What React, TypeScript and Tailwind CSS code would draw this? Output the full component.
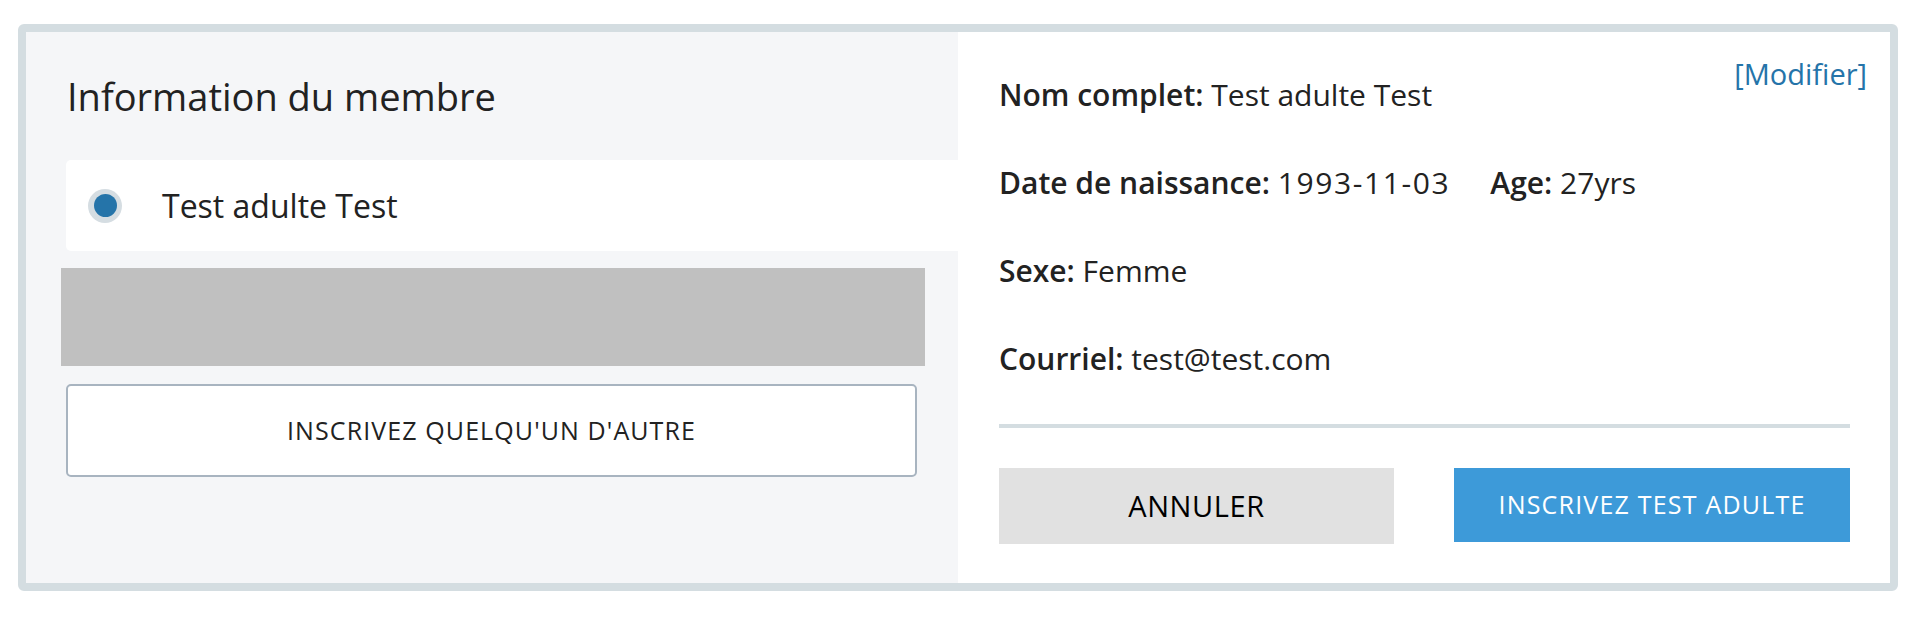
import React from "react";

export default function App() {
  const font = { fontFamily: "'Open Sans', Lato, sans-serif" };
  return (
    <div className="w-[1924px] h-[618px] bg-white pl-[18px] pt-[24px]" style={font}>
      <div className="w-[1880px] h-[567px] border-[8px] border-[#d4dde1] rounded-[6px] flex overflow-hidden text-[#222]">
        <div className="w-[932px] h-full bg-[#f5f6f8] flex flex-col">
          <h1 className="ml-[41px] mt-[40px] text-[38px] leading-[48px] font-normal text-[#222]">
            Information du membre
          </h1>
          <div className="ml-[40px] mt-[40px] h-[91px] bg-white rounded-l-[5px] flex items-center">
            <div className="ml-[22px] w-[34px] h-[34px] rounded-full bg-[#d5dde2] flex items-center justify-center">
              <div className="w-[23px] h-[23px] rounded-full bg-[#2574a9]" />
            </div>
            <span className="ml-[40px] text-[32px] text-[#222]">Test adulte Test</span>
          </div>
          <div className="ml-[35px] mt-[17px] w-[864px] h-[98px] bg-[#c0c0c0]" />
          <button className="ml-[40px] mt-[18px] w-[851px] h-[93px] bg-white border-2 border-[#a8b4c0] rounded-[5px] text-[25px] tracking-[1.1px] text-[#222] uppercase">
            INSCRIVEZ QUELQU'UN D'AUTRE
          </button>
        </div>
        <div className="flex-1 h-full bg-white relative pl-[41px] pr-[40px] flex flex-col">
          <a className="absolute right-[23px] top-[20px] text-[29px] text-[#2574a9]">[Modifier]</a>
          <div className="mt-[18px] flex flex-col text-[30px]">
            <div className="h-[88px] flex items-center">
              <span className="font-semibold">Nom complet:</span>&nbsp;Test adulte Test
            </div>
            <div className="h-[88px] flex items-center">
              <span className="font-semibold">Date de naissance:</span>&nbsp;
              <span className="tracking-[1.6px]">1993-11-03</span>
              <span className="font-semibold ml-[40px]">Age:</span>&nbsp;27yrs
            </div>
            <div className="h-[88px] flex items-center">
              <span className="font-semibold">Sexe:</span>&nbsp;Femme
            </div>
            <div className="h-[88px] flex items-center">
              <span className="font-semibold">Courriel:</span>&nbsp;test@test.com
            </div>
          </div>
          <div className="mt-[22px] h-[4px] bg-[#d4dde1]" />
          <div className="mt-[40px] flex justify-between">
            <button className="w-[395px] h-[76px] bg-[#e1e1e1] text-[29px] tracking-[0.6px] text-black">ANNULER</button>
            <button className="w-[396px] h-[74px] bg-[#3d9ad9] text-[25px] tracking-[1.2px] text-white">INSCRIVEZ TEST ADULTE</button>
          </div>
        </div>
      </div>
    </div>
  );
}
